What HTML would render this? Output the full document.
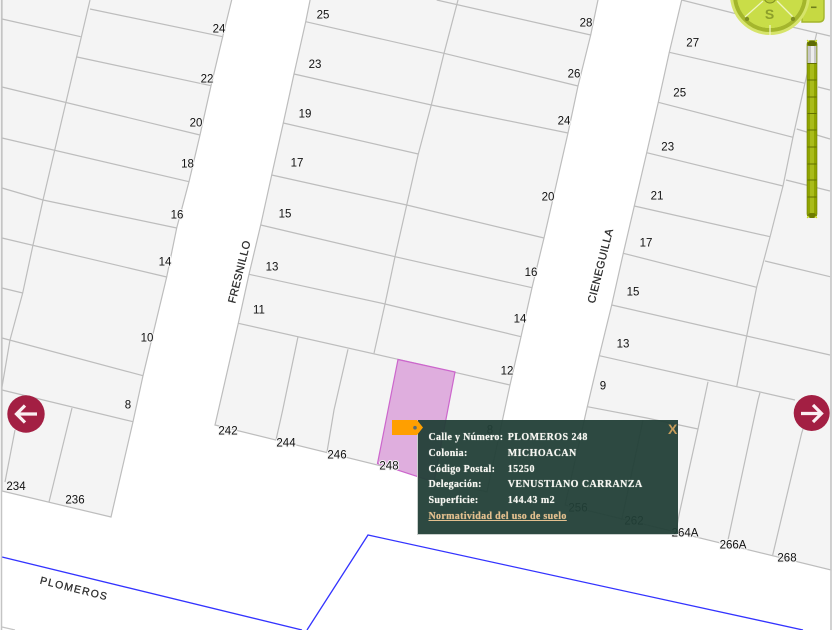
<!DOCTYPE html>
<html lang="es">
<head>
<meta charset="utf-8">
<title>Mapa</title>
<style>
html,body{margin:0;padding:0;background:#fff}
body{width:840px;height:630px;overflow:hidden;position:relative;font-family:"Liberation Sans",sans-serif}
#map{position:absolute;left:0;top:0;filter:blur(.35px)}
#map text{font-family:"Liberation Sans",sans-serif;font-size:11.5px;fill:#111;text-anchor:middle;dominant-baseline:central;paint-order:stroke;stroke:#f4f4f4;stroke-width:2px}
#map text.st{font-size:11px;fill:#2a2a2a;letter-spacing:.35px;stroke:#2a2a2a;stroke-width:.25px}
#panel{position:absolute;left:418px;top:420px;width:260px;height:114px;background:rgba(34,63,55,.95);box-shadow:-1px 1px 0 #c9cfcc}
.r{position:absolute;left:428.5px;font:bold 10px/14px "Liberation Serif",serif;color:#f6f6f1;letter-spacing:.3px;white-space:nowrap;text-shadow:0 0 .6px #f6f6f1}
.v{position:absolute;left:507.7px;font:bold 10px/14px "Liberation Serif",serif;color:#f6f6f1;letter-spacing:.45px;white-space:nowrap;text-shadow:0 0 .6px #f6f6f1}
#lnk{color:#e3c08f;text-decoration:underline;letter-spacing:.32px;text-shadow:0 0 .6px #e3c08f}
#x{position:absolute;left:668px;top:421.5px;font:bold 14px/15px "Liberation Sans",sans-serif;color:#c79d5c}
</style>
</head>
<body>
<svg id="map" width="840" height="630" viewBox="0 0 840 630" xmlns="http://www.w3.org/2000/svg">
<rect x="0" y="0" width="840" height="630" fill="#fff"/>
<g fill="#f4f4f4" stroke="#bdbdbd" stroke-width="1.2">
<polygon points="2,-3 232.4,-3 222.7,36.7 211,85.7 200,135 189,181.7 176.7,228 166.7,277 143,375.7 133,421.7 111,517 2,491"/>
<polygon points="310.7,-3 598.6,-3 590.7,35 578,86 568,133 555,190 544,238 532,287.7 521,336.7 510,385 487,492 215,425 238.3,323.3 249,274.3 260.7,225 271.7,175 283.3,123 294,74 305.7,21.7"/>
<polygon points="682.4,-3 831,-3 831,570 565,505 587.3,406.7 599.3,355.7 611.7,305 623.3,253.3 634.3,206 646.7,152.7 658.3,102.3 669.3,52.3"/>
</g>
<g fill="none" stroke="#bdbdbd" stroke-width="1.2">
<path d="M2 19L80.7 36.7M90 9L222.7 36.7M77 57L211 85.7M2 87L200 135M2 138L189 181.7M2 188L43 200L176.7 228M2 238L166.7 277M2 288L22.7 293M2 338L143 375.7M2 390L133 421.7"/>
<path d="M90 0L43 200L33 245L22.7 293L10 340L2 387M72 408L49 502M15 430L5 482"/>
<path d="M436.7 0L590.7 35M305.7 21.7L444 53.3L578 86M294 74L431.3 105L568 133M283.3 123L418.3 154M271.7 175L406.7 205L544 238M260.7 225L395 256.7L532 287.7M249 274.3L385 304L521 336.7M238.3 323.3L398 359.3L510 385"/>
<path d="M458 0L444 53.3L431.3 105L418.3 154L406.7 205L395 256.7L385 304L374 353.3M298 336.7L282.7 410L276 440M348 349.3L334 410L327 452"/>
<path d="M681.7 0L733 13M733 13L830 36M669.3 52.3L805 83.3M818 87L830 90M658.3 102.3L793 137.3M796.7 129L830 139M646.7 152.7L783 186M786 180L830 191M634.3 206L770 236.7M765 261L830 276.7M623.3 253.3L756.7 287.3M611.7 305L746.7 336L830 355M599.3 355.7L736.7 386.7L795 400M587.3 406.7L646.7 418L698 429"/>
<path d="M816.7 33L805 83L793 137L783 186L770 237L756.7 287L746.7 336L736.7 386.7M708 381.7L698 429L679 515L675 537M760 392.7L758 400L728 540M811 405L801.7 433L772.7 555M643 420L621.7 520"/>
</g>
<polygon points="398,359.5 455,372 434,482 377.5,463.5" fill="#dfaede" stroke="#cc66cc" stroke-width="1.2"/>
<path d="M2 557L302 630M307 630L368 535L803 630" fill="none" stroke="#3333ff" stroke-width="1.3"/>
<path d="M1.5 0V630M831 0V630" stroke="#c4c4c4" stroke-width="1.5"/>
<path d="M2 627L15 630" stroke="#c4c4c4" stroke-width="1.2"/>
<g transform="translate(0 .5)">
<text x="219" y="29">24</text><text x="207" y="79">22</text><text x="196" y="123">20</text><text x="187.5" y="164">18</text><text x="177" y="215">16</text><text x="165" y="262">14</text><text x="147" y="338">10</text><text x="128" y="405">8</text><text x="16" y="486.5">234</text><text x="75" y="500">236</text>
<text x="323" y="15">25</text><text x="315" y="64.5">23</text><text x="305" y="114">19</text><text x="297" y="163">17</text><text x="285" y="214">15</text><text x="272" y="267">13</text><text x="259" y="310">11</text>
<text x="586" y="23">28</text><text x="574" y="74">26</text><text x="564" y="121">24</text><text x="548" y="197">20</text><text x="531" y="272.6">16</text><text x="520" y="319">14</text><text x="507" y="371">12</text><text x="490" y="430">8</text>
<text x="228" y="431">242</text><text x="286" y="443">244</text><text x="337" y="455">246</text><text x="389" y="466">248</text><text x="578" y="508">256</text><text x="634" y="521">262</text><text x="685" y="533">264A</text><text x="733" y="545">266A</text><text x="787" y="558">268</text>
<text x="692.7" y="43">27</text><text x="679.7" y="93">25</text><text x="667.7" y="147">23</text><text x="657" y="196">21</text><text x="646" y="243">17</text><text x="633" y="292">15</text><text x="623" y="344">13</text><text x="603" y="386">9</text>
</g>
<text class="st" transform="translate(240 272) rotate(-76)">FRESNILLO</text>
<text class="st" transform="translate(601 266) rotate(-76)">CIENEGUILLA</text>
<text class="st" style="font-size:10.5px;letter-spacing:1.3px" transform="translate(74 589) rotate(14)">PLOMEROS</text>
</svg>

<div id="panel"></div>
<div class="r" style="top:431px">Calle y Número:</div><div class="v" style="top:431px">PLOMEROS 248</div>
<div class="r" style="top:447px">Colonia:</div><div class="v" style="top:447px">MICHOACAN</div>
<div class="r" style="top:462.5px">Código Postal:</div><div class="v" style="top:462.5px">15250</div>
<div class="r" style="top:478px">Delegación:</div><div class="v" style="top:478px">VENUSTIANO CARRANZA</div>
<div class="r" style="top:493.5px">Superficie:</div><div class="v" style="top:493.5px">144.43 m2</div>
<div class="r" id="lnk" style="top:510px">Normatividad del uso de suelo</div>
<div id="x">X</div>

<svg width="840" height="630" viewBox="0 0 840 630" style="position:absolute;left:0;top:0" xmlns="http://www.w3.org/2000/svg">
<polygon points="392,420 417,420 423,427.5 417,435 392,435" fill="#ff9f00"/>
<circle cx="415" cy="427.7" r="1.8" fill="#5a6a70"/>
<circle cx="26" cy="414" r="18.7" fill="#a31f43"/>
<path d="M37 414H18M25 405.5L16.5 414L25 422.5" fill="none" stroke="#fbeff2" stroke-width="3.2"/>
<circle cx="811.7" cy="413" r="18" fill="#a31f43"/>
<path d="M801 413.5H820M813 405L821.5 413.5L813 422" fill="none" stroke="#fbeff2" stroke-width="3.2"/>
<path d="M802 -2H824V17Q824 22 819 22H802Z" fill="#c6d942" stroke="#a3b52b" stroke-width="1.4"/>
<rect x="811" y="6.5" width="5.5" height="1.6" fill="#6f7e1c"/>
<circle cx="770" cy="-5" r="40" fill="#d6e46a"/>
<circle cx="770" cy="-5" r="35" fill="none" stroke="#a4b62c" stroke-width="4"/>
<circle cx="770" cy="-5" r="33" fill="#c9dd48"/>
<path d="M770 25V35M763 1L745 17M777 1L793 17" stroke="#eef4c0" stroke-width="1.3" fill="none"/>
<circle cx="770" cy="-3" r="6" fill="#b8cb38" stroke="#7f8f22" stroke-width="1"/>
<circle cx="747" cy="19" r="2.2" fill="#7f8f22"/><circle cx="793" cy="19" r="2.2" fill="#7f8f22"/>
<text x="769.5" y="14" font-family="Liberation Sans, sans-serif" font-size="14" font-weight="bold" fill="#8d9f2a" text-anchor="middle" dominant-baseline="central">S</text>
<rect x="807" y="40.5" width="10" height="177" rx="3.5" fill="#8fa300" stroke="#6d7c00" stroke-width=".6"/>
<rect x="810" y="46" width="4" height="171" fill="#a9bc1a"/>
<rect x="807.5" y="46" width="9" height="17" fill="#c8c8c8"/>
<rect x="811" y="46" width="3" height="17" fill="#ececec"/>
<rect x="807.5" y="41" width="9" height="5" rx="2.5" fill="#5d6a05"/>
<rect x="808" y="213" width="8" height="5" rx="2.5" fill="#6d7c00"/>
<path d="M807 40L809 42M817 40L815 42M807 218L809 216M817 218L815 216" stroke="#c9e000" stroke-width="1"/>
<path d="M807.5 63.5H816.5M807.5 80H816.5M807.5 97H816.5M807.5 113.5H816.5M807.5 130H816.5M807.5 147H816.5M807.5 164H816.5M807.5 180H816.5M807.5 197H816.5" stroke="#627000" stroke-width="1"/>
</svg>
</body>
</html>
